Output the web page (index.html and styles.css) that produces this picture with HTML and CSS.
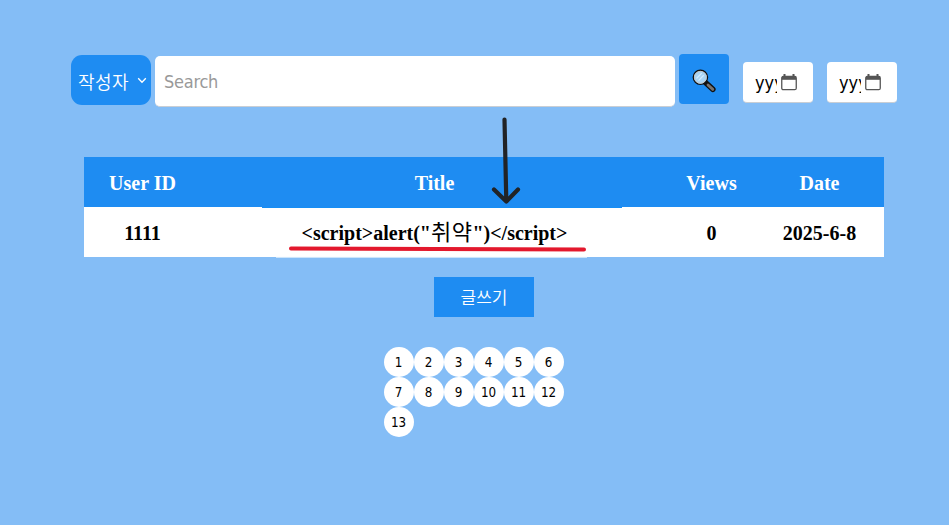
FILE: index.html
```html
<!DOCTYPE html>
<html lang="ko">
<head>
<meta charset="utf-8">
<title>Board</title>
<link rel="stylesheet" href="styles.css">
</head>
<body>
<form class="search">
  <button type="button" class="category"><span>작성자</span>
    <svg width="10" height="7" viewBox="0 0 10 7"><path d="M1.2 1.2 5 5.2 8.8 1.2" fill="none" stroke="#fff" stroke-width="1.3"/></svg>
  </button>
  <input class="query" type="text" placeholder="Search">
  <button type="button" class="submit" aria-label="Search">
    <svg width="24" height="24" viewBox="0 0 24 24">
      <path d="M14 14 20.8 20.3" stroke="#111" stroke-width="5.6" stroke-linecap="round"/>
      <path d="M16 16 20.8 20.4" stroke="#777370" stroke-width="2.8" stroke-linecap="round"/>
      <circle cx="8.4" cy="8.3" r="7.1" fill="#a9d4f5" stroke="#111" stroke-width="1.4"/>
      <circle cx="8.4" cy="8.3" r="6" fill="none" stroke="#c3c7ca" stroke-width="1"/>
      <path d="M4.5 9.5 9.7 4.1M6.5 11.6l5.2-5.3" stroke="#d3ecff" stroke-width="1.3"/>
    </svg>
  </button>
  <div class="date"><span>yyyy</span><svg width="16" height="17" viewBox="0 0 16 17"><path d="M3.5 0v3M12.5 0v3" stroke="#555" stroke-width="2"/><rect x=".75" y="2.5" width="14.5" height="13.2" rx="1.5" fill="none" stroke="#555" stroke-width="1.3"/><path d="M1 2.2h14v3.6H1z" fill="#555"/></svg></div>
  <div class="date"><span>yyyy</span><svg width="16" height="17" viewBox="0 0 16 17"><path d="M3.5 0v3M12.5 0v3" stroke="#555" stroke-width="2"/><rect x=".75" y="2.5" width="14.5" height="13.2" rx="1.5" fill="none" stroke="#555" stroke-width="1.3"/><path d="M1 2.2h14v3.6H1z" fill="#555"/></svg></div>
</form>
<main class="board">
  <div class="row head"><span>User ID</span><span>Title</span><span>Views</span><span>Date</span></div>
  <div class="row"><span>1111</span><span class="title">&lt;script&gt;alert("<span class="ko">취약</span>")&lt;/script&gt;</span><span>0</span><span>2025-6-8</span></div>
  <svg class="marks" width="380" height="150" viewBox="255 115 380 150">
    <path d="M262 207.5h360" stroke="#168ef5" stroke-width="1"/>
    <path d="M276 257.4h311" stroke="#d5eafc" stroke-width="1"/>
    <path d="M291 248.6 584 249.6" stroke="#e3182d" stroke-width="4" stroke-linecap="round"/>
    <path d="M504.5 119.5 506.3 201M494 189.5 506.3 201.5 518 189.5" fill="none" stroke="#212326" stroke-width="4.2" stroke-linecap="round" stroke-linejoin="round"/>
  </svg>
</main>
<button type="button" class="write">글쓰기</button>
<nav class="pages"><a>1</a><a>2</a><a>3</a><a>4</a><a>5</a><a>6</a><a>7</a><a>8</a><a>9</a><a>10</a><a>11</a><a>12</a><a>13</a></nav>
</body>
</html>
```
FILE: styles.css
```css
* { box-sizing: border-box; }
body {
  margin: 0;
  min-height: 525px;
  background: #84bdf6;
  font-family: "Liberation Serif", "Noto Sans CJK KR", serif;
}
button, input { border: 0; padding: 0; }
.search {
  display: flex;
  align-items: flex-start;
  height: 157px;
  padding: 54px 0 0 71px;
  font-family: "DejaVu Sans Condensed", "DejaVu Sans", "Noto Sans CJK KR", sans-serif;
}
.category {
  display: flex;
  align-items: center;
  gap: 9px;
  width: 80px;
  height: 50px;
  margin: 1px 4px 0 0;
  padding-left: 7px;
  border-radius: 11px;
  background: #1e8cf2;
  color: #fff;
  font: 350 18px "Noto Sans CJK KR", sans-serif;
  letter-spacing: .4px;
}
.category span { width: 50px; padding-top: 1px; white-space: nowrap; }
.category svg { flex: none; }
.query {
  width: 520px;
  height: 51px;
  margin: 2px 4px 0 0;
  padding: 0 9px;
  border-bottom: 1px solid #c9ced4;
  border-radius: 5px;
  background: #fff;
  font: 18px "DejaVu Sans Condensed", "DejaVu Sans", sans-serif;
  font-stretch: condensed;
  letter-spacing: -.25px;
}
.query::placeholder { color: #999; opacity: 1; }
.submit {
  display: flex;
  align-items: center;
  justify-content: center;
  width: 50px;
  height: 50px;
  margin-right: 14px;
  padding: 3px 1px 0 0;
  border-radius: 4px;
  background: #1e8cf2;
}
.date {
  display: flex;
  align-items: center;
  gap: 4px;
  width: 70px;
  height: 41px;
  margin: 8px 14px 0 0;
  padding-left: 12px;
  border-bottom: 1px solid #c9ced4;
  border-radius: 4px;
  background: #fff;
  font-size: 18px;
}
.date span { width: 22px; overflow: hidden; padding-top: 1px; }
.board { position: relative; width: 800px; margin-left: 84px; }
.row {
  display: grid;
  grid-template-columns: 117px 467px 87px 129px;
  height: 50px;
  line-height: 52px;
  background: #fff;
  color: #000;
  font-size: 20px;
  font-weight: 700;
  text-align: center;
}
.head { background: #1e8cf2; color: #fff; }
.title { white-space: nowrap; }
.ko { font-family: "Noto Sans CJK KR", sans-serif; font-weight: 400; font-size: 22px; line-height: 1; letter-spacing: .5px; }
.marks { position: absolute; left: 171px; top: -42px; }
.write {
  display: block;
  width: 100px;
  height: 40px;
  margin: 20px 0 30px 434px;
  padding-bottom: 2px;
  background: #1e8cf2;
  color: #fff;
  font: 350 17px "Noto Sans CJK KR", sans-serif;
}
.pages { display: flex; flex-wrap: wrap; width: 180px; margin-left: 384px; }
.pages a {
  width: 30px;
  height: 30px;
  padding-right: 1px;
  border-radius: 50%;
  background: #fff;
  color: #000;
  font: 13.3px/31px "DejaVu Sans Condensed", "DejaVu Sans", sans-serif;
  font-stretch: condensed;
  letter-spacing: -.2px;
  text-align: center;
}
```
